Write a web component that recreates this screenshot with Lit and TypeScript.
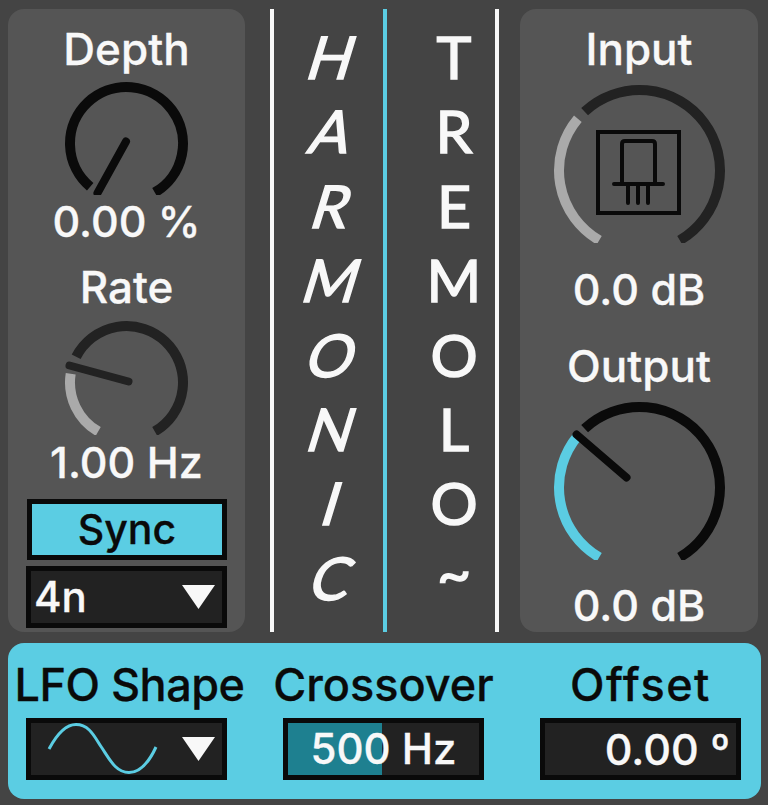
import { html, css, svg, LitElement } from "lit";
import { customElement, property } from "lit/decorators.js";

const SWEEP = 150;

// point on a dial, angle in degrees clockwise from 12 o'clock
function polar(cx: number, cy: number, r: number, deg: number) {
    const a = (deg * Math.PI) / 180;
    return [cx + r * Math.sin(a), cy - r * Math.cos(a)];
}

function arc(cx: number, cy: number, r: number, from: number, to: number) {
    const [x1, y1] = polar(cx, cy, r, from);
    const [x2, y2] = polar(cx, cy, r, to);
    const large = to - from > 180 ? 1 : 0;
    return `M${x1} ${y1}A${r} ${r} 0 ${large} 1 ${x2} ${y2}`;
}

@customElement("dial-knob")
class DialKnob extends LitElement {
    @property({ type: Number }) radius = 56.5;
    @property({ type: Number }) fillTo = -SWEEP;
    @property({ type: Number }) trackFrom = -SWEEP;
    @property({ type: String }) fill = "#aaaaaa";
    @property({ type: String }) track = "#0a0a0a";
    @property({ type: Array }) needle: number[] = [];

    static styles = css`
        :host {
            display: block;
        }
        svg {
            display: block;
        }
    `;

    render() {
        const r = this.radius;
        const size = 2 * r + 12;
        const c = size / 2;
        const height = c + r * 0.866 + 3;
        const [nx, ny, tx, ty] = this.needle;
        return html`
            <svg width=${size} height=${height} viewBox="0 0 ${size} ${height}" fill="none" stroke-width="10">
                ${this.fillTo > -SWEEP
                    ? svg`<path d=${arc(c, c, r, -SWEEP, this.fillTo)} stroke=${this.fill} />`
                    : null}
                <path d=${arc(c, c, r, this.trackFrom, SWEEP)} stroke=${this.track} />
                ${this.needle.length
                    ? svg`<line x1=${c + nx} y1=${c + ny} x2=${c + tx} y2=${c + ty} stroke=${this.track} stroke-width="8" stroke-linecap="round" />`
                    : null}
            </svg>
        `;
    }
}

@customElement("app-root")
class AppRoot extends LitElement {
    static styles = css`
        :host {
            display: block;
            width: 768px;
            height: 805px;
            background: #444444;
            font-family: Inter, "Liberation Sans", sans-serif;
            color: #f8f8f8;
            overflow: hidden;
        }
        .top {
            display: flex;
            height: 623px;
            padding: 9px 0 0 8px;
        }
        .panel {
            width: 237px;
            background: #555555;
            border-radius: 16px;
            display: flex;
            flex-direction: column;
            align-items: center;
            box-sizing: border-box;
            padding-top: 15px;
        }
        .label {
            font-size: 44px;
            font-weight: 500;
            line-height: 50px;
            height: 50px;
            white-space: nowrap;
            -webkit-text-stroke: 0.3px currentColor;
        }
        .value {
            font-size: 43px;
        }
        .right {
            width: 238px;
            margin-left: 21px;
        }
        .left dial-knob {
            margin-top: 7px;
        }
        .left .rate-knob {
            margin-top: 8px;
        }
        .depth-value {
            margin-top: 1px;
        }
        .rate-label {
            margin-top: 16px;
        }
        .rate-value {
            margin-top: 2px;
        }
        .input-knob {
            position: relative;
            margin-top: 10px;
        }
        .tube {
            position: absolute;
            left: 43px;
            top: 46px;
        }
        .input-value {
            margin-top: 21px;
        }
        .output-label {
            margin-top: 27px;
        }
        .output-knob {
            margin-top: 10px;
        }
        .output-value {
            margin-top: 20px;
        }
        .rule {
            width: 4px;
            background: #f8f8f8;
        }
        .rule.first {
            margin-left: 25px;
        }
        .rule.blue {
            background: #5bcde3;
        }
        .title {
            width: 108px;
            padding-top: 11px;
            box-sizing: border-box;
            font-family: Lato, "Liberation Sans", sans-serif;
            font-size: 59px;
            line-height: 74.4px;
            text-align: center;
            -webkit-text-stroke: 1.5px currentColor;
        }
        .title div {
            height: 74.4px;
        }
        .harmonic {
            width: 109px;
            padding-left: 8px;
        }
        .harmonic div {
            transform: skewX(-17deg);
        }
        .tremolo {
            padding-left: 26px;
        }
        .tilde {
            margin-top: -5px;
        }
        .sync {
            box-sizing: border-box;
            width: 200px;
            height: 61px;
            margin: 12px 0 6px 1px;
            border: 5px solid #0a0a0a;
            background: #5bcde3;
            color: #0a0a0a;
            text-align: center;
            font-size: 41px;
            font-weight: 500;
            line-height: 50px;
            -webkit-text-stroke: 0.3px currentColor;
        }
        .box {
            box-sizing: border-box;
            width: 201px;
            height: 62px;
            border: 5px solid #0a0a0a;
            background: #222222;
            display: flex;
            align-items: center;
            font-size: 42px;
            font-weight: 500;
            line-height: 50px;
            -webkit-text-stroke: 0.3px currentColor;
        }
        .menu {
            justify-content: space-between;
            padding: 0 7px 0 3px;
        }
        .sine {
            margin-left: 13px;
        }
        .bottom {
            box-sizing: border-box;
            width: 753px;
            height: 156px;
            margin: 11px 0 0 8px;
            padding: 17px 0 0 18px;
            background: #5bcde3;
            border-radius: 16px;
            display: flex;
            gap: 56px;
            color: #0a0a0a;
        }
        .bottom .label {
            font-size: 45px;
        }
        .bottom .lfo {
            letter-spacing: -0.5px;
            margin-left: 6px;
        }
        .bottom .offset-label {
            letter-spacing: 1.5px;
        }
        .group {
            width: 201px;
            display: flex;
            flex-direction: column;
            align-items: center;
            gap: 8px;
        }
        .bottom .box {
            color: #f8f8f8;
        }
        .xover {
            justify-content: center;
            background: linear-gradient(90deg, #1e8090 0 94px, #222222 94px);
        }
        .offset {
            justify-content: flex-end;
            padding-right: 6px;
            font-size: 43px;
        }
    `;

    render() {
        return html`
            <div class="top">
                <section class="panel left">
                    <div class="label">Depth</div>
                    <dial-knob .trackFrom=${-140} .needle=${[-0.5, -2, -29, 49.5]}></dial-knob>
                    <div class="label value depth-value">0.00 %</div>
                    <div class="label rate-label">Rate</div>
                    <dial-knob
                        class="rate-knob"
                        .fillTo=${-81}
                        .trackFrom=${-63}
                        track="#222222"
                        .needle=${[2, -1, -57, -17]}
                    ></dial-knob>
                    <div class="label value rate-value">1.00 Hz</div>
                    <div class="sync">Sync</div>
                    <div class="box menu">4n ${this.arrow()}</div>
                </section>
                <div class="rule first"></div>
                <div class="title harmonic">${[..."HARMONIC"].map((c) => html`<div>${c}</div>`)}</div>
                <div class="rule blue"></div>
                <div class="title tremolo">
                    ${[..."TREMOLO"].map((c) => html`<div>${c}</div>`)}
                    <div class="tilde">~</div>
                </div>
                <div class="rule"></div>
                <section class="panel right">
                    <div class="label">Input</div>
                    <div class="input-knob">
                        <dial-knob
                            .radius=${80.5}
                            .fillTo=${-50}
                            .trackFrom=${-43}
                            track="#222222"
                        ></dial-knob>
                        <svg class="tube" width="85" height="85" viewBox="0 0 85 85" fill="none" stroke="#0a0a0a" stroke-width="4" stroke-linecap="round" stroke-linejoin="round">
                            <rect x="2" y="2" width="81" height="81" stroke-linecap="butt" stroke-linejoin="miter" />
                            <path d="M26 53V14Q26 11 29 11H56Q59 11 59 14V53" />
                            <path d="M18 54H67M32 54V73M42 54V73M52 54V73" />
                        </svg>
                    </div>
                    <div class="label value input-value">0.0 dB</div>
                    <div class="label output-label">Output</div>
                    <dial-knob
                        class="output-knob"
                        .radius=${80.5}
                        .fillTo=${-50}
                        .trackFrom=${-43}
                        fill="#5bcde3"
                        .needle=${[-13, -10, -63, -53]}
                    ></dial-knob>
                    <div class="label value output-value">0.0 dB</div>
                </section>
            </div>
            <section class="bottom">
                <div class="group">
                    <div class="label lfo">LFO Shape</div>
                    <div class="box menu">
                        <svg class="sine" width="112" height="52" viewBox="0 0 112 52" fill="none" stroke="#5bcde3" stroke-width="3">
                            <path d="M2 26C10 11 19 1.5 29 1.5C43 1.5 48 15 55 25C63 37 69 49.5 82 49.5C94 49.5 103 37 109 24" />
                        </svg>
                        ${this.arrow()}
                    </div>
                </div>
                <div class="group">
                    <div class="label">Crossover</div>
                    <div class="box xover">500 Hz</div>
                </div>
                <div class="group">
                    <div class="label offset-label">Offset</div>
                    <div class="box offset">0.00 º</div>
                </div>
            </section>
        `;
    }

    arrow() {
        return html`<svg width="33" height="24" viewBox="0 0 33 24"><path d="M0 0H33L16.5 24Z" fill="#f8f8f8" /></svg>`;
    }
}
